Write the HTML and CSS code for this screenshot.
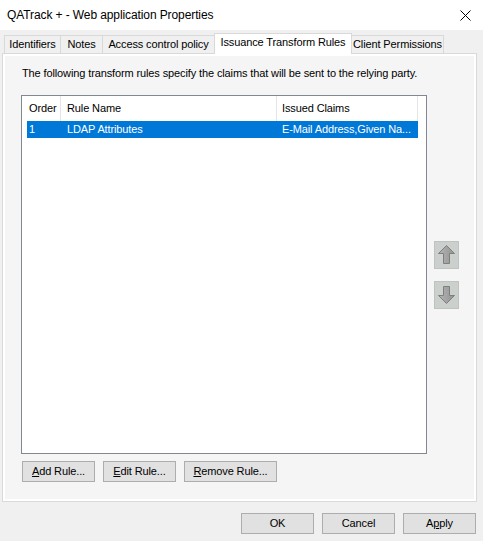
FILE: index.html
```html
<!DOCTYPE html>
<html>
<head>
<meta charset="utf-8">
<title>QATrack + - Web application Properties</title>
<link rel="stylesheet" href="styles.css">
</head>
<body>
<div class="window">
  <div class="titlebar">
    <span class="title">QATrack + - Web application Properties</span>
    <svg class="close" width="11" height="11" viewBox="0 0 11 11"><path d="M0.5 0.5 L10.5 10.5 M10.5 0.5 L0.5 10.5" stroke="#000" stroke-width="1" fill="none"/></svg>
  </div>
  <div class="body">
    <div class="tabs">
      <div class="tab t-ident">Identifiers</div>
      <div class="tab t-notes">Notes</div>
      <div class="tab t-access">Access control policy</div>
      <div class="tab t-issue active">Issuance Transform Rules</div>
      <div class="tab t-client">Client Permissions</div>
    </div>
    <div class="panel">
      <div class="page">
        <p class="intro">The following transform rules specify the claims that will be sent to the relying party.</p>
        <div class="list-area">
          <div class="listbox">
            <div class="lv-header">
              <div class="hcol c-order">Order</div>
              <div class="hcol c-name">Rule Name</div>
              <div class="hcol c-claims">Issued Claims</div>
            </div>
            <div class="lv-row selected">
              <div class="cell c-order">1</div>
              <div class="cell c-name">LDAP Attributes</div>
              <div class="cell c-claims">E-Mail Address,Given Na...</div>
            </div>
          </div>
          <div class="move-btns">
            <button class="move" type="button" aria-label="Move up">
              <svg width="23" height="26" viewBox="0 0 23 26">
                <defs><linearGradient id="ag" x1="0" y1="0" x2="1" y2="0"><stop offset="0" stop-color="#b4b4b4"/><stop offset="1" stop-color="#939393"/></linearGradient></defs>
                <path d="M11.5 3.5 L19.5 11.5 L14.5 11.5 L14.5 21.5 L8.5 21.5 L8.5 11.5 L3.5 11.5 Z" fill="url(#ag)" stroke="#7f7f7f" stroke-width="1" stroke-linejoin="miter"/>
              </svg>
            </button>
            <button class="move" type="button" aria-label="Move down">
              <svg width="23" height="26" viewBox="0 0 23 26">
                <path d="M8.5 4.5 L14.5 4.5 L14.5 13.5 L19.5 13.5 L11.5 21.5 L3.5 13.5 L8.5 13.5 Z" fill="url(#ag)" stroke="#7f7f7f" stroke-width="1" stroke-linejoin="miter"/>
              </svg>
            </button>
          </div>
        </div>
        <div class="rule-btns">
          <button class="btn w73" type="button"><u>A</u>dd Rule...</button>
          <button class="btn w73" type="button"><u>E</u>dit Rule...</button>
          <button class="btn w93" type="button"><u>R</u>emove Rule...</button>
        </div>
      </div>
    </div>
    <div class="footer">
      <button class="btn w73" type="button">OK</button>
      <button class="btn w73" type="button">Cancel</button>
      <button class="btn w73" type="button">A<u>p</u>ply</button>
    </div>
  </div>
</div>
</body>
</html>
```

FILE: styles.css
```css
html, body {
  margin: 0;
  padding: 0;
}
body {
  background: #f0f0f0;
  font-family: "Liberation Sans", Arial, sans-serif;
  font-size: 11px;
  letter-spacing: -0.12px;
  color: #000;
  width: 483px;
  height: 541px;
  overflow: hidden;
}
.window {
  width: 483px;
  height: 541px;
}
.titlebar {
  height: 30px;
  background: #fff;
  display: flex;
  align-items: center;
  justify-content: space-between;
  padding: 0 12px 0 7px;
  box-sizing: border-box;
}
.title {
  font-size: 12px;
  letter-spacing: -0.1px;
}
.close {
  display: block;
}
.body {
  padding-top: 3px;
}
.tabs {
  display: flex;
  align-items: flex-end;
  height: 20px;
  padding-left: 4px;
}
.tab {
  box-sizing: border-box;
  height: 18px;
  border: 1px solid #d9d9d9;
  border-bottom: 0;
  margin-right: -1px;
  background: #f0f0f0;
  text-align: center;
  line-height: 17px;
  white-space: nowrap;
}
.tab.active {
  height: 21px;
  margin-bottom: -1px;
  background: #fff;
  position: relative;
  z-index: 1;
  line-height: 16px;
}
.t-ident { width: 57px; }
.t-notes { width: 43px; }
.t-access { width: 113px; }
.t-issue { width: 138px; }
.t-client { width: 93px; }

.panel {
  box-sizing: border-box;
  margin-left: 2px;
  width: 475px;
  height: 449px;
  border: 1px solid #d9d9d9;
  background: #fff;
  padding: 2px;
}
.page {
  box-sizing: border-box;
  height: 100%;
  background: #f5f5f5;
  padding: 11px 0 0 16px;
}
.intro {
  margin: 0 0 0 1px;
  line-height: 13px;
  white-space: nowrap;
}
.list-area {
  margin-top: 15px;
  display: flex;
  align-items: center;
  gap: 7px;
}
.listbox {
  box-sizing: border-box;
  width: 406px;
  height: 359px;
  border: 1px solid #828790;
  background: #fff;
}
.lv-header {
  display: flex;
  height: 25px;
}
.hcol {
  box-sizing: border-box;
  border-right: 1px solid #e5e5e5;
  line-height: 25px;
  white-space: nowrap;
}
.hcol.c-order { width: 39px; padding-left: 7px; }
.hcol.c-name { width: 216px; padding-left: 6px; }
.hcol.c-claims { width: 141px; padding-left: 5px; }
.lv-row {
  display: flex;
  height: 17px;
  margin-left: 5px;
  width: 391px;
}
.lv-row.selected {
  background: #0078d7;
  color: #fff;
}
.cell {
  box-sizing: border-box;
  line-height: 17px;
  white-space: nowrap;
  overflow: hidden;
}
.cell.c-order { width: 34px; padding-left: 2px; }
.cell.c-name { width: 216px; padding-left: 6px; }
.cell.c-claims { width: 141px; padding-left: 5px; }

.move-btns {
  display: flex;
  flex-direction: column;
  gap: 12px;
}
.move {
  box-sizing: border-box;
  width: 25px;
  height: 28px;
  padding: 0;
  margin: 0;
  border: 1px solid #bfc3bf;
  background: #ccd0cc;
  display: block;
}
.move svg {
  display: block;
}

.rule-btns {
  margin-top: 7px;
  margin-left: 1px;
  display: flex;
  gap: 8px;
}
.btn {
  box-sizing: border-box;
  height: 21px;
  margin: 0;
  padding: 0;
  border: 1px solid #adadad;
  background: #e1e1e1;
  font-family: inherit;
  font-size: 11px;
  letter-spacing: -0.12px;
  color: #000;
  text-align: center;
  line-height: 19px;
}
.w73 { width: 73px; }
.w93 { width: 93px; }

.footer {
  display: flex;
  justify-content: flex-end;
  gap: 8px;
  padding: 11px 7px 0 0;
}
```
